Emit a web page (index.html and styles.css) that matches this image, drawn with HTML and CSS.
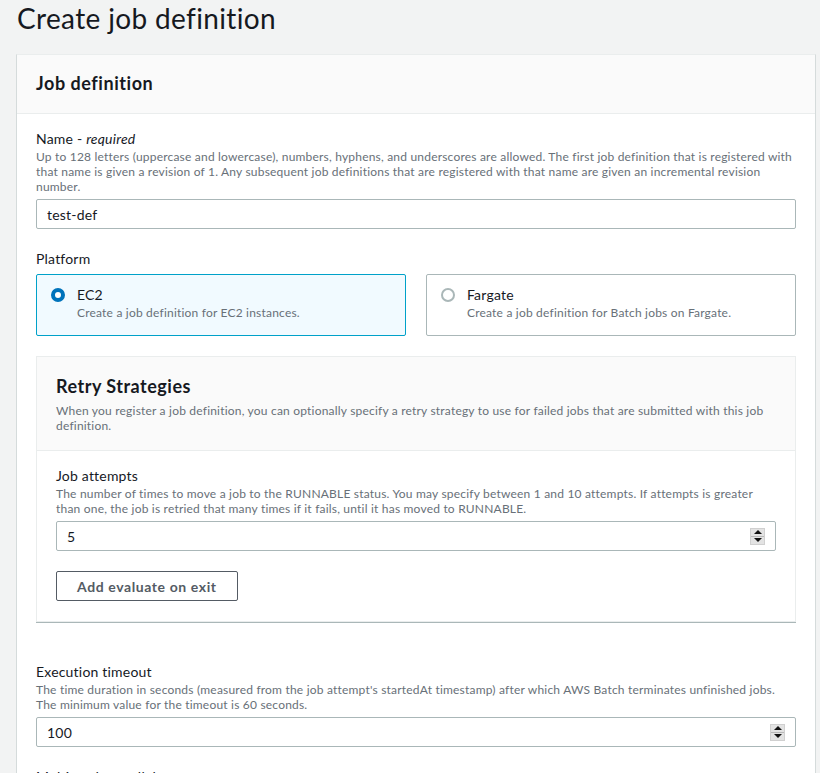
FILE: index.html
```html
<!DOCTYPE html>
<html lang="en">
<head>
<meta charset="utf-8">
<title>Create job definition</title>
<link rel="stylesheet" href="styles.css">
</head>
<body>
<div class="page">
  <h1 class="page-title">Create job definition</h1>
  <section class="card">
    <header class="card-header">
      <h2 class="card-title">Job definition</h2>
    </header>
    <div class="card-body">
      <div class="field">
        <label class="field-label" for="name">Name - <i>required</i></label>
        <p class="field-help">Up to 128 letters (uppercase and lowercase), numbers, hyphens, and underscores are allowed. The first job definition that is registered with that name is given a revision of 1. Any subsequent job definitions that are registered with that name are given an incremental revision number.</p>
        <div class="input-box"><input id="name" class="text-input" type="text" value="test-def"></div>
      </div>

      <div class="field">
        <div class="field-label">Platform</div>
        <div class="tiles">
          <label class="tile tile-selected">
            <span class="radio radio-checked"></span>
            <span class="tile-text">
              <span class="tile-title">EC2</span>
              <span class="tile-desc">Create a job definition for EC2 instances.</span>
            </span>
          </label>
          <label class="tile">
            <span class="radio"></span>
            <span class="tile-text">
              <span class="tile-title">Fargate</span>
              <span class="tile-desc">Create a job definition for Batch jobs on Fargate.</span>
            </span>
          </label>
        </div>
      </div>

      <section class="subsection">
        <header class="sub-header">
          <h3 class="sub-title">Retry Strategies</h3>
          <p class="sub-desc">When you register a job definition, you can optionally specify a retry strategy to use for failed jobs that are submitted with this job definition.</p>
        </header>
        <div class="sub-body">
          <div class="field">
            <label class="field-label" for="attempts">Job attempts</label>
            <p class="field-help">The number of times to move a job to the RUNNABLE status. You may specify between 1 and 10 attempts. If attempts is greater than one, the job is retried that many times if it fails, until it has moved to RUNNABLE.</p>
            <div class="input-box">
              <input id="attempts" class="text-input" type="text" value="5">
              <span class="spinner"><span class="spin-up"></span><span class="spin-down"></span></span>
            </div>
          </div>
          <button class="btn" type="button">Add evaluate on exit</button>
        </div>
      </section>

      <div class="field">
        <label class="field-label" for="timeout">Execution timeout</label>
        <p class="field-help">The time duration in seconds (measured from the job attempt's startedAt timestamp) after which AWS Batch terminates unfinished jobs. The minimum value for the timeout is 60 seconds.</p>
        <div class="input-box">
          <input id="timeout" class="text-input" type="text" value="100">
          <span class="spinner"><span class="spin-up"></span><span class="spin-down"></span></span>
        </div>
      </div>

      <div class="field">
        <div class="field-label">Multi-node parallel</div>
      </div>
    </div>
  </section>
</div>
</body>
</html>
```

FILE: styles.css
```css
* { box-sizing: border-box; }

html, body {
  margin: 0;
  background: #f2f3f3;
}

body {
  font-family: Lato, "Noto Sans", Arial, sans-serif;
  color: #16191f;
  overflow: hidden;
}

.page {
  padding: 0 4px 0 16px;
}

.page-title {
  margin: 0 0 18px 1px;
  font-size: 28px;
  line-height: 36px;
  font-weight: 400;
  letter-spacing: 0.35px;
  color: #16191f;
}

.card {
  background: #ffffff;
  border: 1px solid #d5dbdb;
  border-top-color: #eaeded;
}

.card-header {
  background: #fafafa;
  border-bottom: 1px solid #eaeded;
  padding: 17px 19px 19px;
}

.card-title {
  margin: 0;
  font-size: 18px;
  line-height: 22px;
  font-weight: 700;
  letter-spacing: 0.55px;
}

.card-body {
  padding: 15px 19px 20px;
  display: flex;
  flex-direction: column;
  gap: 20px;
}

.field-label {
  display: block;
  font-size: 14px;
  line-height: 20px;
  letter-spacing: 0.2px;
  color: #16191f;
}

.field-help {
  margin: 0;
  font-size: 12px;
  line-height: 15px;
  letter-spacing: 0.2px;
  color: #687078;
}

.input-box {
  margin-top: 5px;
  height: 30px;
  border: 1px solid #aab7b8;
  border-radius: 2px;
  background: #fff;
  display: flex;
  align-items: center;
}

.text-input {
  flex: 1;
  min-width: 0;
  height: 100%;
  border: 0;
  outline: 0;
  background: transparent;
  padding: 0 10px;
  font: inherit;
  font-size: 14px;
  letter-spacing: 0.2px;
  color: #16191f;
}

.spinner {
  width: 15px;
  height: 17px;
  margin-right: 10px;
  display: flex;
  flex-direction: column;
  background: #e3e3e3;
  border: 1px solid #d0d0d0;
}

.spin-up, .spin-down {
  flex: 1;
  display: flex;
  align-items: center;
  justify-content: center;
}

.spin-up { border-bottom: 1px solid #b8b8b8; }

.spin-up::before {
  content: "";
  border-left: 4px solid transparent;
  border-right: 4px solid transparent;
  border-bottom: 4px solid #111;
}

.spin-down::before {
  content: "";
  border-left: 4px solid transparent;
  border-right: 4px solid transparent;
  border-top: 4px solid #111;
}

.tiles {
  margin-top: 5px;
  display: grid;
  grid-template-columns: 1fr 1fr;
  gap: 20px;
}

.tile {
  display: flex;
  align-items: flex-start;
  gap: 12px;
  border: 1px solid #aab7b8;
  border-radius: 2px;
  padding: 10px 14px 15px;
  background: #fff;
}

.tile-selected {
  background: #f1faff;
  border-color: #00a1c9;
}

.radio {
  flex: none;
  width: 14px;
  height: 14px;
  margin-top: 3px;
  border-radius: 50%;
  border: 2px solid #aab7b8;
  background: #fff;
}

.radio-checked {
  border: 4px solid #0073bb;
}

.tile-text {
  display: flex;
  flex-direction: column;
}

.tile-title {
  font-size: 14px;
  line-height: 20px;
  letter-spacing: 0.2px;
  color: #16191f;
}

.tile-desc {
  font-size: 12px;
  line-height: 15px;
  letter-spacing: 0.2px;
  color: #687078;
}

.subsection {
  margin-bottom: 20px;
  border: 1px solid #eaeded;
  box-shadow: 0 1px 0 0 #aab7b8;
  background: #fff;
}

.sub-header {
  background: #fafafa;
  border-bottom: 1px solid #eaeded;
  padding: 18px 19px 17px;
}

.sub-title {
  margin: 0;
  font-size: 18px;
  line-height: 22px;
  font-weight: 700;
  letter-spacing: 0.5px;
}

.sub-desc {
  margin: 6px 0 0;
  font-size: 12px;
  line-height: 15px;
  letter-spacing: 0.2px;
  color: #687078;
}

.sub-body {
  padding: 15px 19px 20px;
}

.btn {
  margin-top: 20px;
  height: 30px;
  padding: 0 20px;
  border: 1px solid #545b64;
  border-radius: 2px;
  background: #fff;
  color: #545b64;
  font-family: inherit;
  font-size: 14px;
  font-weight: 700;
  letter-spacing: 0.6px;
}
```
